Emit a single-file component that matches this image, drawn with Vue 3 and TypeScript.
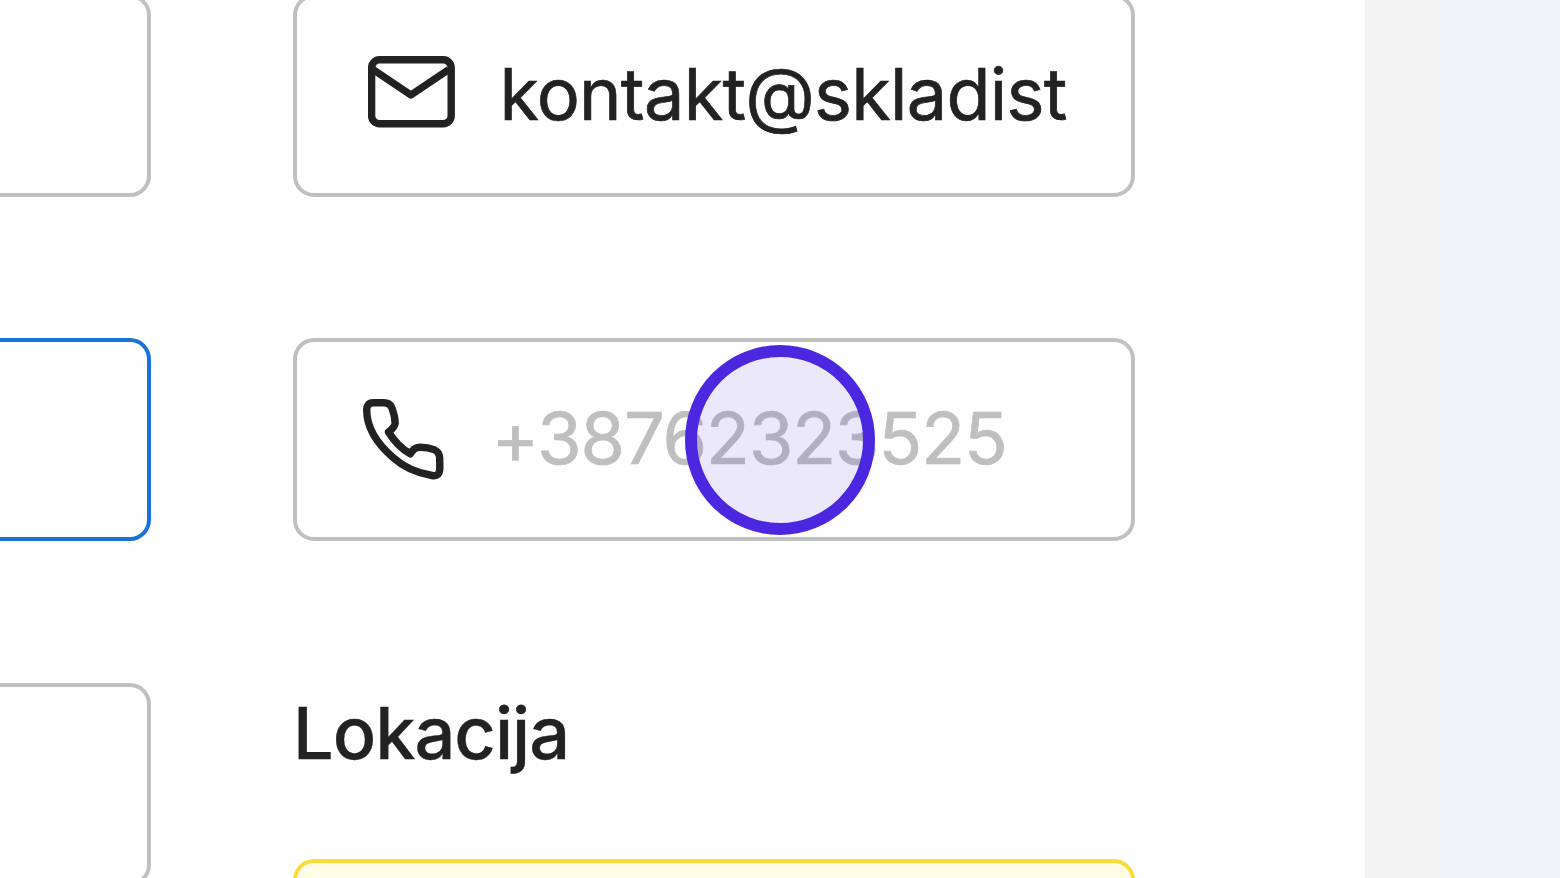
<template>
  <div class="page">
    <main class="panel">
      <div class="column left">
        <div class="field"></div>
        <div class="field focused"></div>
        <div class="field"></div>
      </div>
      <div class="column right">
        <div class="field">
          <svg class="mail" viewBox="0 0 87 72">
            <rect x="3.6" y="3.8" width="79.6" height="64" rx="8" />
            <path d="M5 13.5L42.9 39L80.8 13.5" />
          </svg>
          <span class="value">{{ email }}</span>
        </div>
        <div class="field">
          <svg class="phone" viewBox="0 0 82 82">
            <path
              d="M4.7 12C4.7 7.5 6.8 4.7 11 4.7H22C26 4.7 28 6 29.5 9C31.5 14 33 20 33.2 25C33 28.5 30.5 31 26.5 34C32 43 39 50.5 48.3 55.8C51 51.5 53 49.3 58 49.2C63 49.2 68 50 72 51.6C76 53.3 77.5 56 77.7 60L77.8 70C77.8 76 75.3 78.5 70 77.5C55 75 42 69.5 31 59.5C16 46.5 4.7 30 4.7 12Z"
            />
          </svg>
          <span class="value placeholder">{{ phone }}</span>
        </div>
        <label class="title">Lokacija</label>
        <div class="field warning"></div>
      </div>
    </main>
    <div class="gutter"></div>
    <div class="click-marker"></div>
  </div>
</template>

<script setup lang="ts">
import { ref } from "vue";

const email = ref<string>("kontakt@skladist");
const phone = ref<string>("+38762323525");
</script>

<style>
body {
  overflow: hidden;
}
</style>

<style scoped>
.page {
  position: relative;
  display: flex;
  width: 1560px;
  height: 878px;
  overflow: hidden;
  background: #f0f4f9;
  font-family: Inter, sans-serif;
  color: #222;
}

.panel {
  display: flex;
  flex: none;
  gap: 142px;
  width: 1365px;
  height: 878px;
  overflow: hidden;
  background: #fefefe;
}

.gutter {
  width: 76px;
  background: #f3f3f4;
}

.column {
  display: flex;
  flex-direction: column;
  margin-top: -6.4px;
}

.left {
  flex: none;
  gap: 141.5px;
  width: 151px;
}

.left .field {
  border-left: none;
  border-radius: 0 21px 21px 0;
}

.right {
  width: 842px;
}

.field {
  box-sizing: border-box;
  display: flex;
  flex: none;
  align-items: center;
  height: 203px;
  border: 4px solid #c0c0c0;
  border-radius: 21px;
}

.right .field + .field {
  margin-top: 141.5px;
}

.field.focused {
  border-color: #1a73d9;
}

.field.warning {
  margin-top: 77px;
  border-color: #f9dc3c;
  background: #fffce6;
}

svg {
  flex: none;
  fill: none;
  stroke: #222;
  stroke-width: 7.4;
  stroke-linejoin: round;
}

.mail {
  width: 87px;
  height: 72px;
  margin: -7px 44.5px 0 71px;
}

.phone {
  width: 82px;
  height: 82px;
  margin: -1px 47.5px 0 65px;
}

.value {
  margin-top: -3px;
  font-size: 72px;
  line-height: 72px;
  letter-spacing: -0.75px;
  white-space: nowrap;
  -webkit-text-stroke: 0.7px currentColor;
}

.placeholder {
  letter-spacing: -1.1px;
  color: #bfbfbf;
}

.title {
  margin-top: 143px;
  font-size: 72px;
  font-weight: 500;
  line-height: 98px;
  letter-spacing: -1px;
  -webkit-text-stroke: 0.3px currentColor;
}

.click-marker {
  position: absolute;
  top: 345px;
  left: 685px;
  box-sizing: border-box;
  width: 190px;
  height: 190px;
  border: 12px solid #4b28e0;
  border-radius: 50%;
  background: rgba(75, 40, 224, 0.1);
  background-clip: padding-box;
}
</style>
